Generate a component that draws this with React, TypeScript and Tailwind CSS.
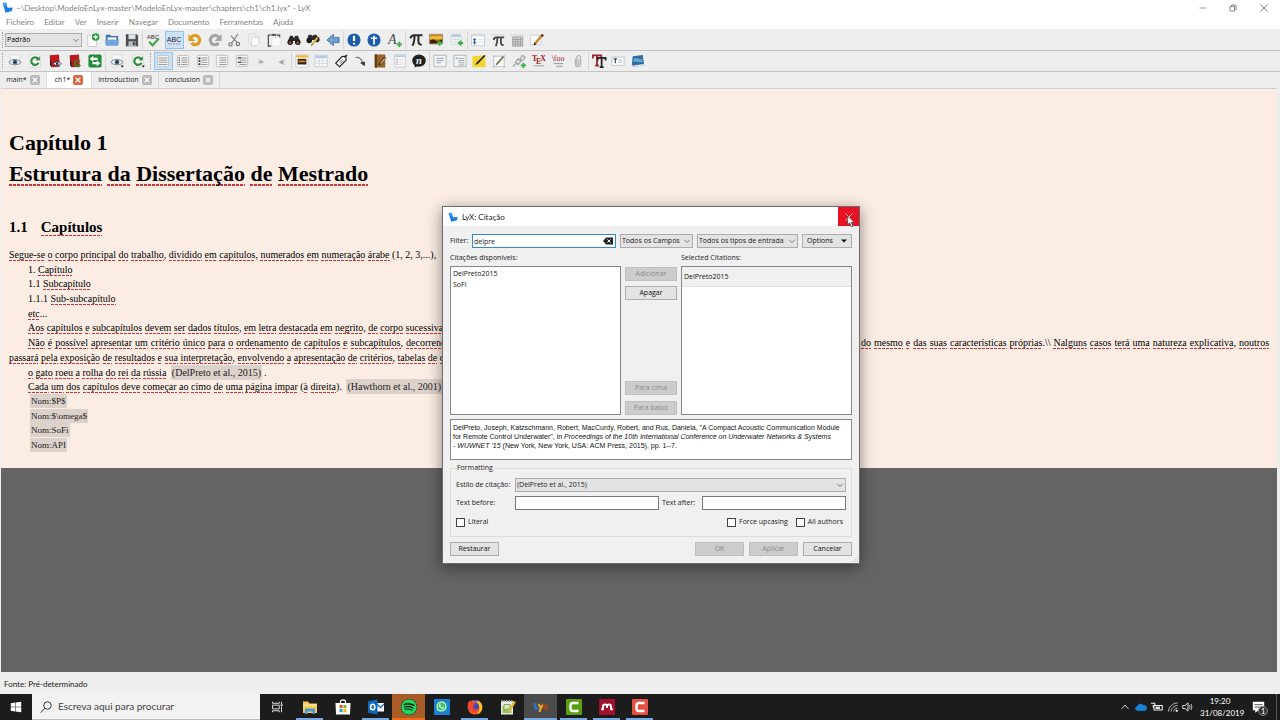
import type { ReactNode } from 'react';
import clsx from 'clsx';
import { FaSpotify, FaWhatsapp, FaWindows } from 'react-icons/fa';

interface IconProps {
  children: ReactNode;
  className?: string;
}

function Icon({ children, className = 'size-4' }: IconProps) {
  return (
    <svg viewBox="0 0 16 16" className={clsx('shrink-0 overflow-visible', className)} fill="none" aria-hidden="true">
      {children}
    </svg>
  );
}

function LyxLogo({ className }: { className?: string }) {
  return (
    <Icon className={className}>
      <path d="M1 1.500 6 1l2 7.500L15.500 8l-1 5L5 15.500z" fill="#1a7fe0" />
      <path d="M1 1.500 6 1l1 4.500-5 1z" fill="#3b9bf0" />
    </Icon>
  );
}

const plus = <path d="M12 8.500v6M9 11.500h6" stroke="#3fae49" strokeWidth="2.400" />;

const eye = (
  <>
    <path d="M2.500 1h11v14h-11z" fill="#fff" stroke="#d6d6d6" />
    <path d="M1 9.500C4 5 12 5 15 9.500 12 13.500 4 13.500 1 9.500z" fill="#e8eef2" stroke="#6d7880" />
    <circle cx="8" cy="9.300" r="2.600" fill="#3d6a8c" />
    <circle cx="8" cy="9.300" r="1.100" fill="#111" />
  </>
);

const refresh = (
  <>
    <path d="M2 1h12v14H2z" fill="#fff" stroke="#d6d6d6" />
    <path d="M11.500 5.500A4.300 4.300 0 1 0 12 10" stroke="#2f8f3a" strokeWidth="2.600" />
    <path d="M8.500 7.500h5V2.500z" fill="#2f8f3a" />
  </>
);

const caret = <path d="M12 13h4l-2 2.500z" fill="#222" />;

function listIcon(marks: ReactNode, x: number) {
  return (
    <>
      <rect x="1.500" y="1.500" width="13" height="13" rx="1.500" fill="#f4f4f4" stroke="#b9b9b9" />
      <path d={`M${x} 4.500H13M${x} 7H13M${x} 9.500H13M${x} 12H13`} stroke="#8d8d8d" />
      {marks}
    </>
  );
}

function piIcon(color: string) {
  return (
    <path
      d="M1.500 6C2.500 3 3.500 2.500 6 2.500h9.500M6.300 3C6.300 8 6 11 4 14.500M10.800 3C10.500 9 10.300 14.500 14.500 13"
      stroke={color}
      strokeWidth="2.300"
    />
  );
}

interface Tool {
  label: string;
  icon: ReactNode;
  active?: boolean;
}

const fileTools: Tool[] = [
  {
    label: 'Novo',
    icon: (
      <>
        <path d="M2 2.500h7l3 3v10H2z" fill="#fff" stroke="#c8c8c8" />
        <circle cx="11" cy="4.500" r="4.300" fill="#1f9e35" />
        <path d="M11 2v5M8.500 4.500h5" stroke="#fff" strokeWidth="1.600" />
      </>
    ),
  },
  {
    label: 'Abrir',
    icon: (
      <>
        <path d="M1 2h5l1 1.500h8V13H1z" fill="#3f73ad" />
        <path d="M3 5h10v4H3z" fill="#fff" />
        <path d="M0 7.500h16l-1 7H1z" fill="#6fa3dc" />
      </>
    ),
  },
  {
    label: 'Guardar',
    icon: (
      <>
        <path d="M1 1.500h12.500l1.500 1.500v12H1z" fill="#4a4f55" />
        <path d="M4 1.500h8v5.500H4z" fill="#dfe3e6" />
        <path d="M4 9.500h8V15H4z" fill="#b8bcc0" />
        <path d="M9 10.500h2V14H9z" fill="#33373b" />
      </>
    ),
  },
];

const spellTools: Tool[] = [
  {
    label: 'Ortografia',
    icon: (
      <>
        <text x="8" y="6.500" fontSize="7" textAnchor="middle" fill="#333" fontFamily="Liberation Sans">ABC</text>
        <path d="m3.500 10 4 4L14.500 6.500" stroke="#4da64d" strokeWidth="2.600" />
      </>
    ),
  },
  {
    label: 'Ortografia contínua',
    active: true,
    icon: (
      <>
        <text x="8" y="10" fontSize="8" textAnchor="middle" fill="#223" fontFamily="Liberation Sans">ABC</text>
        <path d="M1 12.500h14" stroke="#d05a6a" strokeDasharray="2 1" />
      </>
    ),
  },
];

const editTools: Tool[] = [
  {
    label: 'Desfazer',
    icon: (
      <>
        <path d="M3.500 5.500A5.300 5.300 0 1 1 4 11.500" stroke="#e39a1c" strokeWidth="3.600" />
        <path d="M.500 1v8H8.500z" fill="#e39a1c" />
      </>
    ),
  },
  {
    label: 'Refazer',
    icon: (
      <>
        <path d="M12.500 5.500A5.300 5.300 0 1 0 12 11.500" stroke="#a3a3a3" strokeWidth="3.600" />
        <path d="M15.500 1v8H7.500z" fill="#a3a3a3" />
      </>
    ),
  },
  {
    label: 'Cortar',
    icon: (
      <>
        <path d="m12.500 1-7 10.500M4.500 3l7 8" stroke="#888" strokeWidth="1.400" />
        <circle cx="4" cy="13" r="1.900" stroke="#777" strokeWidth="1.300" />
        <circle cx="12.500" cy="12.500" r="1.900" stroke="#777" strokeWidth="1.300" />
      </>
    ),
  },
  {
    label: 'Copiar',
    icon: (
      <>
        <path d="M2 1.500h8v10H2z" fill="#f7f7f7" stroke="#d6d6d6" />
        <path d="M5 4.500h9v7l-3 3H5z" fill="#fafafa" stroke="#cfcfcf" />
      </>
    ),
  },
  {
    label: 'Colar',
    icon: (
      <>
        <path d="M4 2.500H1.500v12.500H5M11 2.500h3.500V6" stroke="#444" strokeWidth="1.300" />
        <path d="M5 1h5.500v2.300H5z" fill="#555" />
        <path d="M5.500 5.500H16v6l-3 3.500H5.500z" fill="#fafafa" stroke="#e2e2e2" />
      </>
    ),
  },
  {
    label: 'Procurar',
    icon: (
      <>
        <path d="M3.500 3h3l1 2h1l1-2h3L15 9H1z" fill="#2c2c2c" />
        <circle cx="3.700" cy="10.500" r="3.200" fill="#1d1d1d" />
        <circle cx="12.300" cy="10.500" r="3.200" fill="#1d1d1d" />
        <circle cx="3.700" cy="11" r="1.500" fill="#a0563f" />
        <circle cx="12.300" cy="11" r="1.500" fill="#a0563f" />
      </>
    ),
  },
  {
    label: 'Procurar e substituir',
    icon: (
      <>
        <path d="M3 2h3l1.500 1.500L9 2h3l3 6H1z" fill="#2c2c2c" />
        <circle cx="3.700" cy="8.500" r="3.200" fill="#1d1d1d" />
        <circle cx="12.300" cy="7.500" r="3.200" fill="#1d1d1d" />
        <path d="m6 14.500 1-3.500 5-6.500 2 1.500-5 7z" fill="#e0b252" />
        <path d="M6 14.500l.5-1.800 1.300 1z" fill="#222" />
      </>
    ),
  },
  {
    label: 'Recuar',
    icon: <path d="M1 8 8.500 1.500v3.500H15v6H8.500v3.500z" fill="#6f9fd0" stroke="#46709e" />,
  },
];

const styleTools: Tool[] = [
  {
    label: 'Ênfase',
    icon: (
      <>
        <circle cx="8" cy="8" r="7.500" fill="#1c5fa8" />
        <path d="M8 3v6M8 11v2.200" stroke="#fff" strokeWidth="2.500" />
      </>
    ),
  },
  {
    label: 'Nome',
    icon: (
      <>
        <circle cx="8" cy="8" r="7.500" fill="#1c5fa8" />
        <path d="M8 3v10M4.500 6h7" stroke="#fff" strokeWidth="1.900" />
      </>
    ),
  },
  {
    label: 'Estilo de texto',
    icon: (
      <>
        <text x="0" y="13" fontSize="16" fontStyle="italic" fill="#4a4a4a" fontFamily="Liberation Serif">A</text>
        <path d="M13 10v6M10 13h6" stroke="#3fae49" strokeWidth="2.200" />
      </>
    ),
  },
];

const picture = (
  <>
    <path d="M.500 1.500h15v11H.500z" fill="#d98a1a" stroke="#888" />
    <path d="M1 4h14v2.500H1z" fill="#f5c542" />
    <path d="M1 8.500 5 7l4 2 6-1.500V12H1z" fill="#3a2408" />
  </>
);

const mathTools: Tool[] = [
  { label: 'Fórmula', icon: piIcon('#2c2c2c') },
  { label: 'Inserir gráfico', icon: <>{picture}{plus}</> },
  {
    label: 'Inserir tabela',
    icon: (
      <>
        <path d="M1.500 1.500h11v11h-11z" fill="#fff" stroke="#cdd5de" />
        <path d="M2 2h10v2.500H2z" fill="#a9c3e0" />
        <path d="M5.500 2v10M9 2v10M2 7.500h10M2 10h10" stroke="#cdd5de" />
        {plus}
      </>
    ),
  },
];

const panelTools: Tool[] = [
  {
    label: 'Índice',
    icon: (
      <>
        <path d="M.500 1.500h15v13H.500z" fill="#fff" stroke="#bfc7cf" />
        <path d="M1 2h14v2H1z" fill="#d7dde3" />
        <path d="M2.500 7.500h3.500M2.500 11h3.500M4 6v7" stroke="#2d6fb5" strokeWidth="1.500" />
        <path d="M8 7.500h6M8 10.500h6" stroke="#dde1e6" />
      </>
    ),
  },
  {
    label: 'Painel de fórmulas',
    icon: (
      <>
        <path d="M0 1.500h16v1.500H0z" fill="#d8d8d8" />
        <path
          d="M3 8c.5-2.500 1.500-3 3-3h9M7.300 5.500C7.300 9 7 12 5.500 15M11.500 5.500C11 10 11 15 14.500 13.500"
          stroke="#444"
          strokeWidth="2"
        />
      </>
    ),
  },
  {
    label: 'Painel de tabelas',
    icon: (
      <>
        <path d="M0 1.500h16v1.500H0z" fill="#d8d8d8" />
        <path d="M3 4.500h11.500v10.500H3z" fill="#dedede" stroke="#9a9a9a" />
        <path d="M6 4.500v10.500M9 4.500v10.500M12 4.500v10.500M3 7.500h11.500M3 10h11.500M3 12.500h11.500" stroke="#9a9a9a" />
      </>
    ),
  },
  {
    label: 'Rever',
    icon: (
      <>
        <path d="M.500 2.500h12v11H.500z" fill="#fafafa" stroke="#ccc" />
        <path d="m4 14 1-3.500L13 1.500l2 1.500-8 10z" fill="#c98a35" />
        <path d="m4 14 1-3.500 2 2.500z" fill="#222" />
        <path d="m12 3 1.500-2L16 2.500 14.500 4.500z" fill="#5b2a1a" />
      </>
    ),
  },
];

const viewTools: Tool[] = [
  { label: 'Ver', icon: eye },
  { label: 'Atualizar', icon: refresh },
  {
    label: 'Ver documento mestre',
    icon: (
      <>
        <path d="M2 1.500 12.500.500l1 14-9.500.5z" fill="#c0161c" />
        <path d="M2 1.500 4.500 15l-2-1.500z" fill="#111" />
        <path d="M6 11c2-3 7-3 9 0-2 3-7 3-9 0z" fill="#e7ecef" stroke="#333" />
        <circle cx="10.500" cy="11" r="1.500" fill="#234" />
      </>
    ),
  },
  {
    label: 'Atualizar documento mestre',
    icon: (
      <>
        <path d="M2 1.500 12.500.500l1 14-9.500.5z" fill="#c0161c" />
        <path d="M2 1.500 4.500 15l-2-1.500z" fill="#111" />
        <path d="M13.500 8.500a3.300 3.300 0 1 0 .3 4" stroke="#3d7a2a" strokeWidth="2.500" />
      </>
    ),
  },
  {
    label: 'Sincronizar',
    icon: (
      <>
        <rect x=".5" y=".5" width="15" height="15" rx="2" fill="#218c38" />
        <path d="M2 5.500 6 2v2.200h5v2.600H6V9zM14 10.500 10 7v2.200H5v2.600h5V14z" fill="#fff" />
      </>
    ),
  },
];

const outputTools: Tool[] = [
  { label: 'Ver outros formatos', icon: <>{eye}{caret}</> },
  { label: 'Atualizar outros formatos', icon: <>{refresh}{caret}</> },
];

const squares = <path d="M3 4.500h1.500M3 7h1.500M3 9.500h1.500M3 12h1.500" stroke="#555" strokeWidth="1.300" />;

const listTools: Tool[] = [
  { label: 'Padrão', icon: listIcon(null, 3), active: true },
  { label: 'Lista numerada', icon: listIcon(squares, 6) },
  {
    label: 'Lista de itens',
    icon: listIcon(<path d="M3 5h2M3 8h2M3 11.500h2" stroke="#222" strokeWidth="2" />, 6),
  },
  { label: 'Lista', icon: listIcon(null, 5) },
  { label: 'Descrição', icon: listIcon(<path d="M3 4.500h4M3 9.500h4" stroke="#444" strokeWidth="1.400" />, 5) },
  { label: 'Aumentar', icon: <><path d="M4 5v8" stroke="#ddd" /><path d="m5 6 6 3.500-6 2z" fill="#b0b0b0" /></> },
  { label: 'Diminuir', icon: <><path d="M13 5v8" stroke="#ddd" /><path d="m11 6-6 3.500 6 3z" fill="#a8a8a8" /></> },
];

const insertTools: Tool[] = [
  {
    label: 'Figura',
    icon: (
      <>
        <path d="M1 1h14v14H1z" fill="#fff" stroke="#c9c9c9" />
        <path d="M1.500 1.500h13v2.500h-13z" fill="#f0b429" />
        <path d="M3 5.500h10V12H3z" fill="#2e2418" />
        <path d="M4 7.500h8v2H4z" fill="#e2861b" />
      </>
    ),
  },
  {
    label: 'Tabela',
    icon: (
      <>
        <path d="M1 1.500h14v13H1z" fill="#fff" stroke="#c0c8d2" />
        <path d="M1.500 2h13v3h-13z" fill="#b9cbe2" />
        <path d="M6 5v9M10 5v9M1 8h14M1 11h14" stroke="#cfd6de" />
      </>
    ),
  },
  {
    label: 'Etiqueta',
    icon: (
      <>
        <path d="M2 10.500 9 3l4.500-.5.500 4.500-7.500 7.500z" fill="#fff" stroke="#222" strokeWidth="1.300" />
        <path d="m6 9.500 3.500-3.500M7.500 11l3.500-3.500" stroke="#444" />
        <path d="m12 4 3-3" stroke="#222" strokeWidth="1.400" />
      </>
    ),
  },
  {
    label: 'Referência cruzada',
    icon: (
      <>
        <path d="M3 4c4-1 7 2 8 6" stroke="#777" strokeWidth="1.300" />
        <path d="m8 10 5.500-1.500V14z" fill="#333" />
      </>
    ),
  },
  {
    label: 'Citação',
    icon: (
      <>
        <path d="M2 .500h12v15H2z" fill="#9a6428" />
        <path d="M2 .500h2.500v15H2z" fill="#5f3a12" />
        <path d="m6 13 1-3 6-7 2 1.500-6 7.500z" fill="#2a2a2a" />
        <path d="m8 10.500 5-6 1 .8-5 6z" fill="#e5c07a" />
      </>
    ),
  },
  {
    label: 'Índice remissivo',
    icon: (
      <>
        <path d="M2 1h12v14H2z" fill="#fff" stroke="#bcc6d2" />
        <path d="M2 1.500h12v2H2z" fill="#b7c9e0" />
        <path d="M4 6.500h1.500M4 9h1.500M4 11.500h1.500" stroke="#456" />
        <path d="M7 6.500h5M7 9h5M7 11.500h5" stroke="#ccc" />
      </>
    ),
  },
  {
    label: 'Nomenclatura',
    icon: (
      <>
        <ellipse cx="8" cy="7.500" rx="7.800" ry="7" fill="#222" />
        <path d="M3 15.500 3 11l5 2z" fill="#222" />
        <text x="8" y="11.500" fontSize="12" fontWeight="bold" fontStyle="italic" textAnchor="middle" fill="#eee" fontFamily="Liberation Serif">n</text>
      </>
    ),
  },
];

const noteTools: Tool[] = [
  {
    label: 'Nota de rodapé',
    icon: (
      <>
        <path d="M1 1.500h14v13H1z" fill="#f3f4f6" stroke="#b5b5b5" />
        <path d="M4 5h8M4 7.500h8M4 10h5" stroke="#8b95a3" />
      </>
    ),
  },
  {
    label: 'Nota de margem',
    icon: (
      <>
        <path d="M1 1.500h14v13H1z" fill="#f3f4f6" stroke="#b5b5b5" />
        <path d="M6 5h7M6 7.500h7M6 10h7M6 12.500h7" stroke="#999" />
        <path d="M3 5h2" stroke="#59c" strokeWidth="1.500" />
      </>
    ),
  },
  {
    label: 'Nota',
    icon: (
      <>
        <path d="M.500 2.500 15 1.500l.5 13.500H.500z" fill="#f3d62c" />
        <path d="m4 12.500 1-2.500L14 1l1.500 1L6.500 11.500z" fill="#222" />
      </>
    ),
  },
  {
    label: 'Caixa',
    icon: (
      <>
        <path d="M2 2.500h12v12H2z" fill="#fafafa" stroke="#b4c0cc" />
        <path d="m4 13 1-2.500L12.500 2 14 3.500 6.500 12z" fill="#7d7850" />
        <path d="M1 1.500h2v2H1zM13 1.500h2v2h-2zM1 13.500h2v2H1zM13 13.500h2v2h-2z" fill="#b4c0cc" />
      </>
    ),
  },
  {
    label: 'Hiperligação',
    icon: (
      <>
        <path d="m1 14.500 3.500-3.500M7 12l-3-2.500 3-4 3 2.500zM9 6l3-4.500L15 3.500l-3 4z" stroke="#9a9fa3" strokeWidth="1.400" />
        <path d="M13 10v6M10 13h6" stroke="#3fae49" strokeWidth="2.200" />
      </>
    ),
  },
  {
    label: 'Código TeX',
    icon: (
      <>
        <text x="0" y="8.500" fontSize="9" fontWeight="bold" fill="#9c1c24" fontFamily="Liberation Serif">T</text>
        <text x="4.500" y="11" fontSize="9" fontWeight="bold" fill="#9c1c24" fontFamily="Liberation Serif">E</text>
        <text x="9.500" y="8.500" fontSize="9" fontWeight="bold" fill="#9c1c24" fontFamily="Liberation Serif">X</text>
        <path d="M2 13.500h12" stroke="#999" />
      </>
    ),
  },
  {
    label: 'Macro matemática',
    icon: (
      <>
        <text x="8" y="8.500" fontSize="9" textAnchor="middle" fill="#9c1c24" fontFamily="Liberation Serif">\foo</text>
        <path d="M3 11h11M6 14h7" stroke="#888" />
      </>
    ),
  },
  {
    label: 'Incluir ficheiro',
    icon: (
      <path
        d="M5 5v6.500a3 3 0 0 0 6 0V4a2.200 2.200 0 0 0-4.400 0v7a1 1 0 0 0 2.200 0V5.500"
        stroke="#b5b5b5"
        strokeWidth="1.400"
      />
    ),
  },
];

const textTools: Tool[] = [
  {
    label: 'Tipo de letra',
    icon: (
      <>
        <path d="M1 5V1.500h9.500V5M5.700 2v11M3.500 13.200h4.500" stroke="#a3232b" strokeWidth="2" />
        <path d="M6.500 7.500V4.500h9V7.500M11 5v9.500M8.800 15h4.500" stroke="#222" strokeWidth="2" />
      </>
    ),
  },
  {
    label: 'Parágrafo',
    icon: (
      <>
        <path d="M1 3.500h14v9.500H1z" fill="#fff" stroke="#b8c2cc" />
        <path d="M3 5.500h4M5 5.500v5" stroke="#444" strokeWidth="1.300" />
        <path d="M8.500 7h4M8.500 9.500h4" stroke="#9ab" />
      </>
    ),
  },
  {
    label: 'Dicionário',
    icon: (
      <>
        <path d="M2 2.500 13.500 1l1.500 12L3 14.500 1 12z" fill="#2a6ea6" />
        <path d="M3 14.500 15 13l-.5-1.500L2.500 13z" fill="#e6eef5" />
        <text x="8" y="9.500" fontSize="6" textAnchor="middle" fill="#cfe2f2" fontFamily="Liberation Sans">Abc</text>
      </>
    ),
  },
];

interface ToolGroupProps {
  tools: Tool[];
  className: string;
}

function ToolGroup({ tools, className }: ToolGroupProps) {
  return (
    <div className={clsx('flex h-[18px] shrink-0 items-center justify-around', className)}>
      {tools.map((tool) => (
        <button
          key={tool.label}
          type="button"
          aria-label={tool.label}
          className={clsx(
            'flex h-[18px] items-center justify-center',
            tool.active ? 'w-[19px] border border-[#90c3ee] bg-[#cbe3f7]' : 'w-[18px]',
          )}
        >
          <Icon className="size-[14px]">{tool.icon}</Icon>
        </button>
      ))}
    </div>
  );
}

function Handle() {
  return <div className="mx-[2px] h-4 w-px shrink-0 border-l border-dotted border-[#a0a0a0]" />;
}

function Marked({ children, heavy }: { children: string; heavy?: boolean }) {
  return (
    <>
      {children.split(/([\p{L}]+(?:-[\p{L}]+)*)/u).map((part, i) =>
        i % 2 === 1 ? (
          <span
            key={i}
            className={clsx(
              'bg-[repeating-linear-gradient(90deg,#cc3535_0_3px,transparent_3px_4px)] bg-bottom bg-no-repeat',
              heavy ? 'bg-[length:100%_2px]' : 'bg-[length:100%_1px] pb-px',
            )}
          >
            {part}
          </span>
        ) : (
          part
        ),
      )}
    </>
  );
}

function Inset({ children }: { children: string }) {
  return <span className="mx-[2px] bg-[#ddd2cb] px-px py-[2px] text-[#222]">{children}</span>;
}

const menus = ['Ficheiro', 'Editar', 'Ver', 'Inserir', 'Navegar', 'Documento', 'Ferramentas', 'Ajuda'];

const tabs = [
  { name: 'main*', className: 'w-[47px]' },
  { name: 'ch1*', className: 'w-[45px]', active: true },
  { name: 'introduction', className: 'w-[67px]' },
  { name: 'conclusion', className: 'w-[61px]' },
];

function TitleBar() {
  return (
    <header className="bg-white font-['Lato',sans-serif] text-[8px] text-[#858585]">
      <div className="flex h-[15px] items-center pl-[2px]">
        <LyxLogo className="mr-[3px] size-[11px]" />
        <h1>~\Desktop\ModeloEnLyx-master\ModeloEnLyx-master\chapters\ch1\ch1.lyx* - LyX</h1>
        <div className="ml-auto flex">
          <button type="button" aria-label="Minimizar" className="flex w-[30px] justify-center">
            <Icon className="size-2"><path d="M1 8h14" stroke="#999" strokeWidth="2" /></Icon>
          </button>
          <button type="button" aria-label="Restaurar janela" className="flex w-[30px] justify-center">
            <Icon className="size-2"><path d="M2 5h9v9H2zM5 5V2h9v9h-3" stroke="#888" strokeWidth="2" /></Icon>
          </button>
          <button type="button" aria-label="Fechar" className="flex w-8 justify-center">
            <Icon className="size-2"><path d="m1 1 14 14M15 1 1 15" stroke="#888" strokeWidth="2" /></Icon>
          </button>
        </div>
      </div>
      <nav className="flex h-[14px] items-center gap-[10px] pl-[6px]">
        {menus.map((menu) => (
          <button key={menu} type="button">{menu}</button>
        ))}
      </nav>
    </header>
  );
}

function Chevron({ className }: { className?: string }) {
  return (
    <Icon className={clsx('pointer-events-none absolute top-1/2 size-[6px] -translate-y-1/2', className)}>
      <path d="m1 5 7 7 7-7" stroke="#555" strokeWidth="2" />
    </Icon>
  );
}

interface PickerProps {
  label: string;
  value: string;
  className: string;
  id?: string;
}

function Picker({ label, value, className, id }: PickerProps) {
  return (
    <div className={clsx('relative h-[14px] text-[7px]', className)}>
      <select
        id={id}
        aria-label={label}
        className="block h-full w-full appearance-none border border-[#adadad] bg-[#e3e3e3] pl-px leading-3"
      >
        <option>{value}</option>
      </select>
      <Chevron className="right-[3px]" />
    </div>
  );
}

function Toolbars() {
  return (
    <>
      <div className="flex h-[22px] items-center border-b border-[#c3c3c3] bg-[#eeeeee]">
        <Handle />
        <Picker label="Ambiente" value="Padrão" className="w-[77px]" />
        <ToolGroup tools={fileTools} className="ml-px w-[59px]" />
        <ToolGroup tools={spellTools} className="w-[43px] border-l border-[#d5d5d5]" />
        <ToolGroup tools={editTools} className="w-[158px]" />
        <ToolGroup tools={styleTools} className="w-[62px] border-l border-[#d5d5d5]" />
        <ToolGroup tools={mathTools} className="w-[62px] border-l border-[#d5d5d5]" />
        <ToolGroup tools={panelTools} className="w-[80px] border-l border-[#d5d5d5]" />
      </div>
      <div className="flex h-[21px] items-center border-b border-[#c3c3c3] bg-[#eeeeee]">
        <Handle />
        <ToolGroup tools={viewTools} className="w-[100px]" />
        <ToolGroup tools={outputTools} className="w-[43px] border-l border-[#d5d5d5]" />
        <Handle />
        <ToolGroup tools={listTools} className="w-[138px]" />
        <ToolGroup tools={insertTools} className="w-[138px] border-l border-[#d5d5d5]" />
        <ToolGroup tools={noteTools} className="w-[159px] border-l border-[#d5d5d5]" />
        <ToolGroup tools={textTools} className="w-[60px] border-l border-[#d5d5d5]" />
      </div>
    </>
  );
}

function TabBar() {
  return (
    <div className="flex h-4 bg-[#eeeeee] text-[7px] text-[#222]" role="tablist">
      {tabs.map((tab) => (
        <div
          key={tab.name}
          className={clsx(
            'flex items-center justify-center gap-[3px] border-r border-[#d9d9d9]',
            tab.active && 'bg-white',
            tab.className,
          )}
        >
          <button type="button" role="tab" aria-selected={!!tab.active}>{tab.name}</button>
          <button
            type="button"
            aria-label={`Fechar ${tab.name}`}
            className={clsx(
              'flex size-[10px] items-center justify-center rounded-[2px]',
              tab.active ? 'bg-[#d9683f]' : 'bg-[#b9b9b9]',
            )}
          >
            <Icon className="size-[6px]"><path d="m2 2 12 12M14 2 2 14" stroke="#fff" strokeWidth="3.500" /></Icon>
          </button>
        </div>
      ))}
    </div>
  );
}

function Document() {
  return (
    <main className="mx-px mr-[3px] flex-1 overflow-hidden border-t border-[#d0d0d0] bg-[#646464] font-['Liberation_Serif',serif]">
      <article className="bg-[#fbede4] pt-[38px] pr-2 pb-[15px] pl-2 text-[10px] text-black">
        <h2 className="text-[22px]/[31px] font-bold">
          Capítulo 1
          <br />
          <Marked heavy>Estrutura da Dissertação de Mestrado</Marked>
        </h2>
        <h3 className="mt-7 text-[15px]/5 font-bold">
          <span className="mr-[13px]">1.1</span>
          <Marked>Capítulos</Marked>
        </h3>
        <div className="mt-[10px] leading-[15px] [&>p]:indent-[19px] [&>p:nth-child(3n)]:-mt-px">
          <p className="indent-0!">
            <Marked>Segue-se o corpo principal do trabalho, dividido em capítulos, numerados em numeração árabe (1, 2, 3,...),</Marked>
          </p>
          <p>1. <Marked>Capítulo</Marked></p>
          <p>1.1 <Marked>Subcapítulo</Marked></p>
          <p>1.1.1 <Marked>Sub-subcapítulo</Marked></p>
          <p><Marked>etc...</Marked></p>
          <p>
            <Marked>Aos capítulos e subcapítulos devem ser dados títulos, em letra destacada em negrito, de corpo sucessivamente menor.</Marked>
          </p>
          <p className="text-justify">
            <Marked>
              Não é possível apresentar um critério único para o ordenamento de capítulos e subcapítulos, decorrendo este da natureza do trabalho, do tema escolhido, dos objetivos e métodos de investigação propostos do mesmo e das suas características próprias.\\ Nalguns casos terá uma natureza explicativa, noutros passará pela exposição de resultados e sua interpretação, envolvendo a apresentação de critérios, tabelas de dados.
            </Marked>
          </p>
          <p>
            <Marked>o gato roeu a rolha do rei da rússia</Marked> <Inset>(DelPreto et al., 2015)</Inset>.
          </p>
          <p>
            <Marked>Cada um dos capítulos deve começar ao cimo de uma página impar (à direita).</Marked>{' '}
            <Inset>(Hawthorn et al., 2001)</Inset>
          </p>
          {['Nom:$P$', 'Nom:$\\omega$', 'Nom:SoFi', 'Nom:API'].map((entry) => (
            <p key={entry} className="text-[9px]/[15px]"><Inset>{entry}</Inset></p>
          ))}
        </div>
      </article>
    </main>
  );
}

interface PushButtonProps {
  children: ReactNode;
  className?: string;
  disabled?: boolean;
}

function PushButton({ children, className, disabled }: PushButtonProps) {
  return (
    <button
      type="button"
      disabled={disabled}
      className={clsx(
        'flex h-[14px] items-center justify-center border',
        disabled ? 'border-[#bfbfbf] bg-[#cccccc] text-[#8a8a8a]' : 'border-[#adadad] bg-[#e3e3e3] text-[#111]',
        className,
      )}
    >
      {children}
    </button>
  );
}

function Check({ label }: { label: string }) {
  return (
    <label className="flex items-center gap-[3px]">
      <input type="checkbox" className="size-[9px] appearance-none border border-[#444] bg-white" />
      {label}
    </label>
  );
}

function CitationDialog() {
  return (
    <section
      role="dialog"
      aria-label="LyX: Citação"
      className="absolute top-[206px] left-[442px] flex h-[358px] w-[418px] flex-col border border-[#6b6b6b] bg-[#f0f0f0] text-[7px]/3 text-[#222] shadow-[0_3px_14px_rgba(0,0,0,0.45)]"
    >
      <div className="flex h-[19px] shrink-0 items-center bg-white pl-[5px]">
        <LyxLogo className="mr-1 size-[10px]" />
        <h2 className="font-['Lato',sans-serif] text-[8px]">LyX: Citação</h2>
        <button type="button" aria-label="Fechar diálogo" className="ml-auto flex h-full w-[21px] items-center justify-center bg-[#e81123]">
          <Icon className="size-2"><path d="m1 1 14 14M15 1 1 15" stroke="#fff" strokeWidth="1.500" /></Icon>
        </button>
      </div>

      <div className="flex flex-1 flex-col px-[7px]">
        <div className="mt-2 flex items-center">
          <label htmlFor="filter" className="w-[22px]">Filter:</label>
          <div className="relative h-[14px] w-[144px]">
            <input
              id="filter"
              defaultValue="delpre"
              className="block h-full w-full border border-[#2f8fc4] bg-white px-px outline-none"
            />
            <button type="button" aria-label="Limpar" className="absolute top-0 right-[3px] flex h-[14px] items-center">
              <Icon className="size-[10px]">
                <path d="M0 8 5 2.500h11v11H5z" fill="#222" />
                <path d="m7 5.500 5 5M12 5.500l-5 5" stroke="#fff" strokeWidth="1.600" />
              </Icon>
            </button>
          </div>
          <Picker label="Campos" value="Todos os Campos" className="ml-1 w-[73px]" />
          <Picker label="Tipos de entrada" value="Todos os tipos de entrada" className="ml-1 w-[101px]" />
          <PushButton className="ml-1 flex-1 gap-2">
            Options
            <Icon className="size-[6px]"><path d="M0 4h16l-8 8z" fill="#111" /></Icon>
          </PushButton>
        </div>

        <div className="mt-1 flex gap-1">
          <div className="w-[171px]">
            <h3>Citações disponíveis:</h3>
            <ul className="mt-[2px] h-[149px] border border-[#828790] bg-white pt-px pl-[2px] text-[#111]">
              <li className="leading-[11px]">DelPreto2015</li>
              <li className="leading-[11px]">SoFi</li>
            </ul>
          </div>
          <div className="flex w-[52px] flex-col pt-[15px]">
            <PushButton disabled>Adicionar</PushButton>
            <PushButton className="mt-[5px]">Apagar</PushButton>
            <PushButton disabled className="mt-auto">Para cima</PushButton>
            <PushButton disabled className="mt-[6px]">Para baixo</PushButton>
          </div>
          <div className="flex-1">
            <h3>Selected Citations:</h3>
            <ul className="mt-[2px] h-[149px] border border-[#828790] bg-white text-[#111]">
              <li className="border-b border-[#e0e0e0] bg-[#f0f0f0] pl-[2px] leading-[19px]">DelPreto2015</li>
            </ul>
          </div>
        </div>

        <p className="mt-1 h-[41px] border border-[#828790] bg-white px-[2px] pt-[3px] font-['Liberation_Sans',sans-serif] leading-[9px] whitespace-nowrap text-[#111]">
          DelPreto, Joseph, Katzschmann, Robert, MacCurdy, Robert, and Rus, Daniela, "A Compact Acoustic Communication Module
          <br />
          for Remote Control Underwater", in <i>Proceedings of the 10th International Conference on Underwater Networks &amp; Systems
          <br />- WUWNET '15</i> (New York, New York, USA: ACM Press, 2015), pp. 1--7.
        </p>

        <fieldset className="mt-[2px] border border-[#dcdcdc] px-[5px] pb-2">
          <legend className="px-px">Formatting</legend>
          <div className="mt-1 flex items-center">
            <label htmlFor="style" className="w-[59px]">Estilo de citação:</label>
            <Picker id="style" label="Estilo de citação" value="(DelPreto et al., 2015)" className="flex-1" />
          </div>
          <div className="mt-1 flex items-center">
            <label htmlFor="before" className="w-[59px]">Text before:</label>
            <input id="before" className="h-[14px] w-0 flex-1 border border-[#7a7a7a] bg-white px-px" />
            <label htmlFor="after" className="w-[43px] pl-[3px]">Text after:</label>
            <input id="after" className="h-[14px] w-0 flex-1 border border-[#7a7a7a] bg-white px-px" />
          </div>
          <div className="mt-[6px] flex items-center gap-2 pr-[3px]">
            <Check label="Literal" />
            <div className="ml-auto"><Check label="Force upcasing" /></div>
            <Check label="All authors" />
          </div>
        </fieldset>

        <div className="mt-[5px] flex gap-[5px]">
          <PushButton className="mr-auto w-[49px]">Restaurar</PushButton>
          <PushButton disabled className="w-[49px]">OK</PushButton>
          <PushButton disabled className="w-[49px]">Aplicar</PushButton>
          <PushButton className="w-[49px]">Cancelar</PushButton>
        </div>
      </div>

      <Icon className="absolute right-px bottom-px size-[6px]">
        <path d="M2 14h2M8 14h2M14 14h2M8 8h2M14 8h2M14 2h2" stroke="#b0b0b0" strokeWidth="2.500" />
      </Icon>
      <svg viewBox="0 0 12 18" className="absolute top-2 right-1 h-[13px] w-2" aria-hidden="true">
        <path d="M1 1v13l3-3 2.500 6 2.500-1-2.500-5.500H11z" fill="#fff" stroke="#333" />
      </svg>
    </section>
  );
}

interface TaskbarApp {
  label: string;
  icon: ReactNode;
  state?: 'open' | 'focused' | 'alert';
}

function letterC(fill: string) {
  return (
    <>
      <rect width="16" height="16" rx="1" fill={fill} />
      <path d="M12.500 4H7Q4.500 4 4.500 6.500v3Q4.500 12 7 12h5.500" stroke="#fff" strokeWidth="2.400" />
    </>
  );
}

const apps: TaskbarApp[] = [
  {
    label: 'Vista de tarefas',
    icon: (
      <Icon className="size-3">
        <path d="M2 1v2h9V1M2 15v-2h9v2M2 5.500h9v5H2zM14 1v3M14 7v8" stroke="#ddd" strokeWidth="1.300" />
        <path d="M13 4.500h2.500v2H13z" fill="#fff" />
      </Icon>
    ),
  },
  {
    label: 'Explorador',
    state: 'open',
    icon: (
      <Icon>
        <path d="M1 2.500h5l1.500 2H15V14H1z" fill="#f7ca52" />
        <path d="M1 5.500h14V7H1z" fill="#fde49a" />
        <path d="M3 15V9.500h10V15h-2.500v-2.500h-5V15z" fill="#4b9ad5" />
      </Icon>
    ),
  },
  {
    label: 'Loja',
    icon: (
      <Icon>
        <path d="M5.500 4V2.500Q5.500 1 8 1t2.500 1.500V4" stroke="#eee" strokeWidth="1.300" />
        <path d="M.500 4h15l-.5 11.500H1z" fill="#fff" />
        <path d="M4.500 6H7.600v3.200H4.500z" fill="#e8502e" />
        <path d="M8.400 6h3.100v3.200H8.400z" fill="#7fb928" />
        <path d="M4.500 10h3.100v3.200H4.500z" fill="#1f9fe0" />
        <path d="M8.400 10h3.100v3.200H8.400z" fill="#fbb813" />
      </Icon>
    ),
  },
  {
    label: 'Outlook',
    state: 'open',
    icon: (
      <Icon>
        <path d="M8 4h8v8.500H8z" fill="#fff" />
        <path d="m9 5 3.500 3.500L16 5" stroke="#1b74c5" strokeWidth="1.300" />
        <path d="M0 2.300 9.500.500v15L0 13.700z" fill="#0f68b8" />
        <ellipse cx="4.700" cy="8" rx="2.100" ry="2.700" stroke="#fff" strokeWidth="1.600" />
      </Icon>
    ),
  },
  {
    label: 'Spotify',
    state: 'alert',
    icon: <FaSpotify className="size-4 rounded-full bg-[#111] text-[#1ed760]" />,
  },
  {
    label: 'WhatsApp',
    icon: (
      <span className="flex size-4 items-center justify-center bg-[#1b7fd4]">
        <FaWhatsapp className="size-[11px] rounded-full bg-[#35c26a] text-white" />
      </span>
    ),
  },
  {
    label: 'Firefox',
    state: 'open',
    icon: (
      <Icon>
        <circle cx="8" cy="8.300" r="7.300" fill="#f0602a" />
        <path d="M8 1c5 0 7.500 4 7.300 8-.3 3-2.300 5.500-5 6.300C14 11 13 5 8 1z" fill="#ffc02e" />
        <circle cx="8" cy="8" r="4" fill="#3d49b5" />
        <path d="M1 4c1-2 2.500-2.500 2.500-2.500L5 4l3 1-2 2.500c0 3 4 4 6 1.500-.5 3.500-4 5-7 4C1.500 12 .3 8 1 4z" fill="#f2452c" />
        <path d="M5 2c2-1.500 5-1.500 7 0-2 0-2.500 1-2.500 1z" fill="#3f5fc8" />
      </Icon>
    ),
  },
  {
    label: 'Notepad++',
    icon: (
      <Icon>
        <path d="M1 2h12v13.500H1z" fill="#e9eee4" />
        <path d="M1 2h12" stroke="#9a9a9a" strokeWidth="2" strokeDasharray="1.500 1" />
        <path d="M2.500 7h9v7h-9z" fill="#94c355" />
        <path d="M4 5.500h6v4L4 11z" fill="#dcebc4" stroke="#8aa56a" />
        <path d="m8 12 5.500-10L16 3l-6 10z" fill="#e2b93c" />
      </Icon>
    ),
  },
  {
    label: 'LyX',
    state: 'focused',
    icon: (
      <Icon>
        <path d="m1.500 4 1.500 6 3-1" stroke="#2a72d8" strokeWidth="2.300" />
        <path d="m5.500 5 2.500 4 2.500-4M8 8.500 6.500 13" stroke="#f0a81e" strokeWidth="2.200" />
        <path d="m10 5 5 6M15 4.500 10.500 11" stroke="#9c4521" strokeWidth="2" />
      </Icon>
    ),
  },
  { label: 'Camtasia', state: 'open', icon: <Icon>{letterC('#5a9e14')}</Icon> },
  {
    label: 'Mendeley',
    state: 'open',
    icon: (
      <Icon>
        <rect width="16" height="16" fill="#a10f2b" />
        <path d="M4 10V7.500a2 2 0 0 1 4 0V9M8 9V7.500a2 2 0 0 1 4 0V10" stroke="#fff" strokeWidth="1.900" />
        <circle cx="3.500" cy="10.300" r="1.300" fill="#fff" />
        <circle cx="12.500" cy="10.300" r="1.300" fill="#fff" />
      </Icon>
    ),
  },
  { label: 'Camtasia Recorder', state: 'open', icon: <Icon>{letterC('#e5513f')}</Icon> },
];

function Taskbar() {
  return (
    <footer className="flex h-[26px] shrink-0 items-stretch bg-[#1c1c1c] font-['Lato',sans-serif] text-white">
      <button type="button" aria-label="Iniciar" className="flex w-8 items-center justify-center">
        <FaWindows className="size-3" />
      </button>
      <label className="flex w-[228px] items-center border-b border-[#bbb] bg-[#f2f2f2] pl-2 text-[#444]">
        <Icon className="mr-[6px] size-3">
          <circle cx="10" cy="6" r="5" stroke="#333" strokeWidth="1.300" />
          <path d="m6.500 9.500-5.500 6" stroke="#333" strokeWidth="1.300" />
        </Icon>
        <input
          aria-label="Procurar no computador"
          placeholder="Escreva aqui para procurar"
          className="w-full bg-transparent text-[10px] outline-none placeholder:text-[#444]"
        />
      </label>
      {apps.map((app) => (
        <button
          key={app.label}
          type="button"
          aria-label={app.label}
          className={clsx(
            'flex w-[33px] items-center justify-center',
            app.state === 'alert' && 'bg-[#a85c28]',
            app.state === 'focused' && 'bg-[#4b4b4b]',
          )}
        >
          <span
            className={clsx(
              'flex h-full items-center justify-center border-b-2 pt-px',
              !app.state && 'w-[27px] border-transparent',
              app.state === 'open' && 'w-[27px] border-[#76a9e0]',
              app.state === 'focused' && 'w-full border-[#76a9e0]',
              app.state === 'alert' && 'w-full border-[#ef6b1e]',
            )}
          >
            {app.icon}
          </span>
        </button>
      ))}
      <div className="ml-auto flex items-center">
        <Icon className="size-2"><path d="m1 12 7-8 7 8" stroke="#ddd" strokeWidth="1.800" /></Icon>
        <Icon className="ml-[6px] size-3">
          <path d="M3.500 13a3 3 0 0 1-.5-6 4.500 4.500 0 0 1 8-1.500A3.800 3.800 0 0 1 13 13z" fill="#1782d6" />
        </Icon>
        <Icon className="ml-1 size-3">
          <path d="M4 6h11v6H4z" stroke="#eee" strokeWidth="1.400" />
          <path d="M6 7.500h6v3H6z" fill="#eee" />
          <path d="M0 3h5v3H3v3" stroke="#eee" strokeWidth="1.500" />
        </Icon>
        <Icon className="ml-1 size-3">
          <path d="M2 14C2 8 8 2.500 14 2.500M5.500 14c0-4 4-8 8.500-8M9 14c0-2.500 2.500-4.500 5-4.500" stroke="#ccc" strokeWidth="1.200" />
          <circle cx="13" cy="13" r="1.500" fill="#eee" />
        </Icon>
        <Icon className="ml-[3px] size-3">
          <path d="M1 6h3l4-3.500v11L4 10H1z" stroke="#eee" strokeWidth="1.200" />
          <path d="M10 5.500q1.500 2.500 0 5M12 4q2.500 4 0 8" stroke="#ccc" strokeWidth="1.200" />
        </Icon>
        <div className="ml-[6px] w-10 text-center text-[8px]/3">
          <time className="block">19:20</time>
          <time className="block">31/08/2019</time>
        </div>
        <button type="button" aria-label="Notificações" className="relative mr-[11px] ml-3 flex">
          <Icon className="size-[13px]">
            <path d="M1 1h14v10.500H8L4 14.500v-3H1z" fill="#fff" />
            <path d="M3 4.500h10M3 7.500h10" stroke="#333" />
          </Icon>
          <span className="absolute top-[5px] left-[6px] flex size-[10px] items-center justify-center rounded-full border border-[#888] bg-[#333] text-[8px] leading-none">
            1
          </span>
        </button>
        <span className="h-full w-1 border-l border-[#555]" />
      </div>
    </footer>
  );
}

export default function App() {
  return (
    <div className="relative flex h-screen flex-col overflow-hidden bg-[#eeeeee] font-['Open_Sans','Noto_Sans',sans-serif]">
      <TitleBar />
      <Toolbars />
      <TabBar />
      <Document />
      <div className="mt-[2px] flex h-5 shrink-0 items-center pl-1 font-['Lato',sans-serif] text-[8px] text-[#222]">
        Fonte: Pré-determinado
      </div>
      <Taskbar />
      <CitationDialog />
    </div>
  );
}
